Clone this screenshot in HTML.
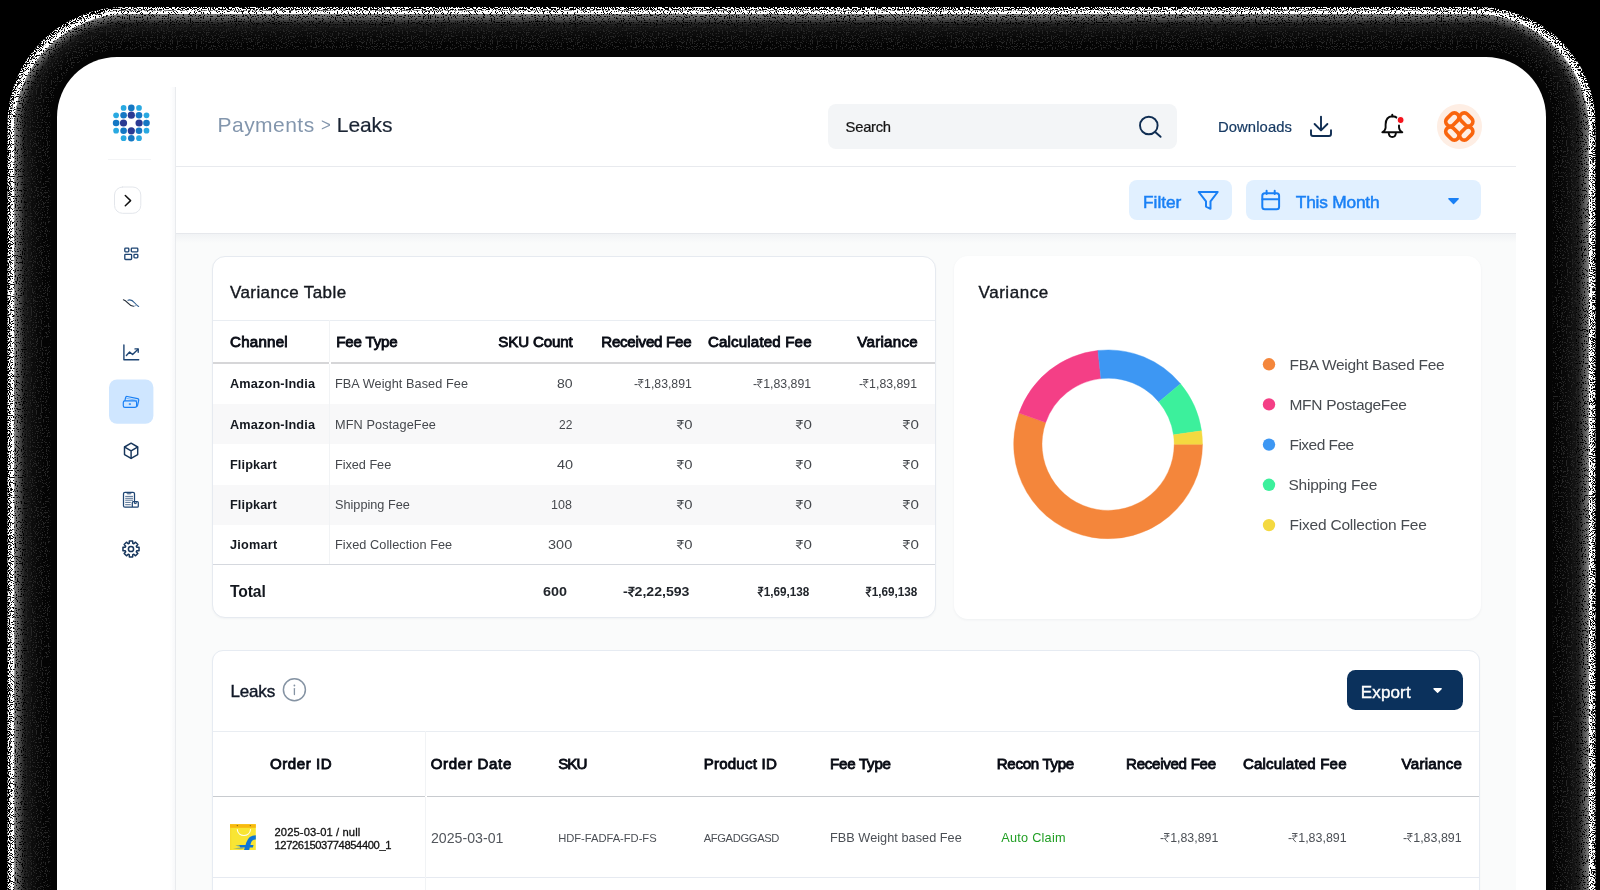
<!DOCTYPE html>
<html>
<head>
<meta charset="utf-8">
<title>Payments - Leaks</title>
<style>
*{box-sizing:border-box;margin:0;padding:0}
html,body{width:1600px;height:890px;overflow:hidden;background:#000}
body{font-family:"Liberation Sans",sans-serif;position:relative;color:#1e293b}
.abs{position:absolute}
.t{position:absolute;white-space:nowrap;line-height:1}
#frame{position:absolute;left:0;top:0;width:1600px;height:890px}
#app{position:absolute;left:57px;top:57px;width:1489px;height:900px;background:#fff;border-radius:60px 60px 0 0;overflow:hidden}
/* coordinates inside #app are page coords minus 57 -> use wrapper shifted */
#pg{position:absolute;left:-57px;top:-57px;width:1600px;height:890px;will-change:transform}
#main{position:absolute;left:176px;top:234px;width:1340px;height:700px;background:#fafbfb}
#main:before{content:"";position:absolute;left:0;top:0;width:100%;height:9px;background:linear-gradient(#f1f3f5,#fafbfb)}
.card{position:absolute;background:#fff;border:1px solid #e6eaf0;border-radius:13px;box-shadow:0 1px 2px rgba(16,40,80,.04)}
.hl{position:absolute;height:1px;background:#e6eaf0}
.vl{position:absolute;width:1px;background:#eef0f4}
.b{font-weight:bold}
.r{text-align:right}
svg{position:absolute;overflow:visible}
.rs{position:relative;display:inline-block;width:.46em;height:.73em;margin:0 .02em 0 .01em;vertical-align:baseline;top:.03em}
.rs svg{position:absolute;left:0;top:0;width:100%;height:100%}
</style>
</head>
<body>
<!-- FRAME-START -->
<svg id="frame" width="1600" height="890" viewBox="0 0 1600 890">
<defs>
<filter id="nzA" x="0" y="0" width="1600" height="890" filterUnits="userSpaceOnUse" color-interpolation-filters="sRGB">
<feTurbulence type="fractalNoise" baseFrequency="0.85" numOctaves="1" seed="7" result="t"/>
<feColorMatrix in="t" type="matrix" values="0 0 0 0 0  0 0 0 0 0  0 0 0 0 0  30 0 0 0 -14.4"/>
<feComposite in2="SourceGraphic" operator="in"/>
</filter>
<filter id="nzB" x="0" y="0" width="1600" height="890" filterUnits="userSpaceOnUse" color-interpolation-filters="sRGB">
<feTurbulence type="fractalNoise" baseFrequency="0.85" numOctaves="1" seed="11" result="t"/>
<feColorMatrix in="t" type="matrix" values="0 0 0 0 0  0 0 0 0 0  0 0 0 0 0  30 0 0 0 -16.8"/>
<feComposite in2="SourceGraphic" operator="in"/>
</filter>
<filter id="nzC" x="0" y="0" width="1600" height="890" filterUnits="userSpaceOnUse" color-interpolation-filters="sRGB">
<feTurbulence type="fractalNoise" baseFrequency="0.85" numOctaves="1" seed="23" result="t"/>
<feColorMatrix in="t" type="matrix" values="0 0 0 0 0  0 0 0 0 0  0 0 0 0 0  30 0 0 0 -17.7"/>
<feComposite in2="SourceGraphic" operator="in"/>
</filter>
<filter id="nzD" x="0" y="0" width="1600" height="890" filterUnits="userSpaceOnUse" color-interpolation-filters="sRGB">
<feTurbulence type="fractalNoise" baseFrequency="0.8" numOctaves="1" seed="41" result="t"/>
<feColorMatrix in="t" type="matrix" values="0 0 0 0 .15  0 0 0 0 .15  0 0 0 0 .15  0 30 0 0 -17.4"/>
<feComposite in2="SourceGraphic" operator="in"/>
</filter>
</defs>
<rect width="1600" height="890" fill="#000"/>
<rect x="7.5" y="7.1" width="1588.0" height="1000" rx="116.9" fill="#fff"/>
<rect x="14.3" y="13.9" width="1574.4" height="1000" rx="114.7" fill="#767676"/>
<rect x="16.3" y="15.9" width="1570.4" height="1000" rx="112.1" fill="#646464"/>
<rect x="18.3" y="17.9" width="1566.4" height="1000" rx="109.5" fill="#505050"/>
<rect x="20.3" y="19.9" width="1562.4" height="1000" rx="107.0" fill="#3c3c3c"/>
<rect x="22.3" y="21.9" width="1558.4" height="1000" rx="104.4" fill="#2a2a2a"/>
<rect x="24.3" y="23.9" width="1554.4" height="1000" rx="101.9" fill="#1b1b1b"/>
<rect x="27.3" y="26.9" width="1548.4" height="1000" rx="98.0" fill="#121212"/>
<rect x="31.3" y="30.9" width="1540.4" height="1000" rx="92.9" fill="#0c0c0c"/>
<rect x="36.3" y="35.9" width="1530.4" height="1000" rx="86.5" fill="#080808"/>
<rect x="42.3" y="41.9" width="1518.4" height="1000" rx="78.8" fill="#040404"/>
<path filter="url(#nzA)" fill="#000" fill-rule="evenodd" d="M0 0H1600V890H0Z M10.8 1000V125.8A115.4 115.4 0 0 1 126.2 10.4H1476.8A115.4 115.4 0 0 1 1592.2 125.8V1000Z"/>
<path filter="url(#nzB)" fill="#000" fill-rule="evenodd" d="M10.8 1000V125.8A115.4 115.4 0 0 1 126.2 10.4H1476.8A115.4 115.4 0 0 1 1592.2 125.8V1000Z M14.3 1000V128.6A114.7 114.7 0 0 1 129.0 13.9H1474.0A114.7 114.7 0 0 1 1588.7 128.6V1000Z"/>
<path filter="url(#nzC)" fill="#000" fill-rule="evenodd" d="M14.3 1000V128.6A114.7 114.7 0 0 1 129.0 13.9H1474.0A114.7 114.7 0 0 1 1588.7 128.6V1000Z M27.3 1000V124.9A98.0 98.0 0 0 1 125.3 26.9H1477.7A98.0 98.0 0 0 1 1575.7 124.9V1000Z"/>
<path filter="url(#nzD)" fill="#2a2a2a" fill-rule="evenodd" d="M25.3 1000V125.5A100.6 100.6 0 0 1 125.9 24.9H1477.1A100.6 100.6 0 0 1 1577.7 125.5V1000Z M50.3 1000V118.5A68.6 68.6 0 0 1 118.9 49.9H1484.1A68.6 68.6 0 0 1 1552.7 118.5V1000Z"/>
</svg>
<!-- FRAME-END -->

<div id="app"><div id="pg">
<!-- SIDEBAR-START -->
<div class="abs" style="left:170px;top:87px;width:5px;height:820px;background:linear-gradient(90deg,rgba(240,242,245,0),rgba(240,242,245,.5))"></div>
<div class="vl" style="left:175px;top:87px;height:820px;background:#e9ebee"></div>
<div class="hl" style="left:108px;top:159px;width:43px;background:#f3f4f6"></div>
<svg style="left:0;top:0" width="200" height="600" viewBox="0 0 200 600" fill="none" stroke-linecap="round" stroke-linejoin="round">
<!-- logo -->
<g stroke="none">
<g fill="#29a9e1">
<circle cx="123.6" cy="107.9" r="2.85"/><circle cx="139" cy="107.9" r="2.85"/>
<circle cx="116.1" cy="115.3" r="2.85"/><circle cx="146.5" cy="115.3" r="2.85"/>
<circle cx="116.1" cy="130.7" r="2.85"/><circle cx="146.5" cy="130.7" r="2.85"/>
<circle cx="123.6" cy="138.2" r="2.85"/><circle cx="139" cy="138.2" r="2.85"/>
</g>
<g fill="#1578c4">
<circle cx="131.3" cy="107.9" r="3.3"/><circle cx="131.3" cy="138.2" r="3.3"/>
<circle cx="116.1" cy="123" r="3.3"/><circle cx="146.5" cy="123" r="3.3"/>
<circle cx="123.6" cy="115.3" r="3.3"/><circle cx="139" cy="115.3" r="3.3"/>
<circle cx="123.6" cy="130.7" r="3.3"/><circle cx="139" cy="130.7" r="3.3"/>
</g>
<g fill="#2b3a93">
<circle cx="131.3" cy="115.2" r="3.6"/><circle cx="131.3" cy="130.8" r="3.6"/>
<circle cx="123.5" cy="123" r="3.6"/><circle cx="139.1" cy="123" r="3.6"/>
</g>
</g>
<!-- toggle -->
<rect x="114.5" y="187" width="26.3" height="26.3" rx="8" fill="#fff" stroke="#e3e6eb" stroke-width="1"/>
<path d="M125.3 195.5L130.6 200.6L125.3 205.7" stroke="#111" stroke-width="1.5"/>
<!-- dashboard -->
<g stroke="#1e4573" stroke-width="1.35">
<rect x="124.8" y="248.1" width="4" height="3.7" rx=".8"/>
<rect x="131.3" y="248.1" width="6.5" height="3.7" rx=".8"/>
<rect x="124.8" y="254.3" width="6.8" height="5.2" rx=".8"/>
<rect x="134" y="254.3" width="3.8" height="3.6" rx=".8"/>
</g>
<!-- wave -->
<path d="M123.4 299.8C127.5 300.6 128.6 306.4 133.6 306.3" stroke="#222a35" stroke-width="1.1"/>
<path d="M128 300.2C133.4 298 134.4 304.6 138.7 306.4" stroke="#2d5c8e" stroke-width="1.1"/>
<path d="M133.6 306.3C135 306.2 136 305.4 136.6 304.6" stroke="#6b87a8" stroke-width=".8"/>
<!-- chart -->
<g stroke="#1e4573" stroke-width="1.4">
<path d="M123.9 345V359.8H138.7"/>
<path d="M126.4 355.4L129.6 352.1L132.6 354.5L138 349.2"/>
<path d="M135 348.9H138.2V352.2"/>
</g>
<!-- active -->
<rect x="109" y="379.4" width="44.4" height="44.4" rx="8" fill="#cfe6ff" stroke="none"/>
<g stroke="#1a80f5" stroke-width="1.2">
<rect x="123.3" y="400.9" width="13.3" height="6.5" rx="1.6"/>
<path d="M124.9 400.6L125.6 397.6Q125.9 396.2 127.3 396.5L137.6 398.7Q139 399 138.7 400.4L137.6 405.4Q137.4 406.2 136.8 406.4"/>
<path d="M126.6 398.3L137.1 400.6" stroke-width=".8" opacity=".6"/>
<rect x="129.5" y="403.6" width="1" height="1" fill="#1a80f5" stroke-width=".6"/>
</g>
<!-- cube -->
<g stroke="#17365c" stroke-width="1.45">
<path d="M131.1 443.2L137.7 447V454.6L131.1 458.4L124.5 454.6V447Z"/>
<path d="M124.7 447.1L131.1 450.8L137.5 447.1M131.1 450.8V458.2"/>
</g>
<!-- clipboard -->
<g stroke="#1e4573" stroke-width="1.25">
<path d="M132 507.2H125Q123.5 507.2 123.5 505.7V493.8Q123.5 492.3 125 492.3H133Q134.5 492.3 134.5 493.8V500.6"/>
<path d="M127 492.5V493.2Q127 493.8 127.6 493.8H130.4Q131 493.8 131 493.2V492.5" stroke-width="1"/>
<path d="M125.6 496.4H132.6M125.6 498.3H132.6M125.6 500.2H132.6M125.6 502.4H130.4M125.6 504.7H130.4" stroke-width=".9" opacity=".85"/>
<rect x="132.3" y="501.6" width="6" height="5.6" rx="1" fill="#fff"/>
<path d="M134.4 501.8V503.6H136.2V501.8" stroke-width="1"/>
</g>
<!-- gear -->
<g stroke="#17365c" stroke-width="1.5">
<circle cx="131" cy="549" r="2.6"/>
<path d="M129.23 543.27 L129.37 540.96 L132.63 540.96 L132.77 543.27 L133.80 543.69 L135.53 542.17 L137.83 544.47 L136.31 546.20 L136.73 547.23 L139.04 547.37 L139.04 550.63 L136.73 550.77 L136.31 551.80 L137.83 553.53 L135.53 555.83 L133.80 554.31 L132.77 554.73 L132.63 557.04 L129.37 557.04 L129.23 554.73 L128.20 554.31 L126.47 555.83 L124.17 553.53 L125.69 551.80 L125.27 550.77 L122.96 550.63 L122.96 547.37 L125.27 547.23 L125.69 546.20 L124.17 544.47 L126.47 542.17 L128.20 543.69Z" stroke-linejoin="round"/>
</g>
</svg>
<!-- SIDEBAR-END -->

<!-- HEADER-START -->
<div class="hl" style="left:176px;top:166px;width:1340px;background:#e8eaee"></div>
<div class="abs" style="left:176px;top:167px;width:1340px;height:66px;background:#fff"></div>
<div class="hl" style="left:176px;top:233px;width:1340px;background:#e6e8ec"></div>
<div class="abs" style="left:828px;top:104px;width:349px;height:45px;border-radius:8px;background:#f3f5f7"></div>
<div class="abs" style="left:1128.8px;top:180.2px;width:103.7px;height:40px;border-radius:8px;background:#e1f0ff"></div>
<div class="abs" style="left:1246.3px;top:180.2px;width:234.4px;height:40px;border-radius:8px;background:#e1f0ff"></div>
<div class="abs" style="left:1437px;top:104.2px;width:44.6px;height:44.6px;border-radius:50%;background:#feeee4"></div>
<svg style="left:0;top:0" width="1600" height="240" viewBox="0 0 1600 240" fill="none" stroke-linecap="round" stroke-linejoin="round">
<!-- search -->
<g stroke="#0f2d52" stroke-width="1.9"><circle cx="1148.8" cy="125.5" r="8.8"/><path d="M1155.2 132L1160.6 136.8"/></g>
<!-- download -->
<g stroke="#0f2d52" stroke-width="1.9"><path d="M1311 130.2V134Q1311 136 1313 136H1329Q1331 136 1331 134V130.2"/><path d="M1321 116.6V130M1314.6 124L1321 130.4L1327.4 124"/></g>
<!-- bell -->
<g stroke="#0a0a0a" stroke-width="1.9">
<path d="M1397.600 118.300Q1395.500 116.300 1392.300 116.300Q1385.800 116.700 1385.600 124.500V127.800Q1385.400 130.500 1382.300 132.300H1402.300Q1399.300 130.600 1399.000 127.500V125.500"/>
<path d="M1392.300 116.200V114.800"/>
<path d="M1388.700 133.000Q1389.000 137.000 1392.300 137.000Q1395.600 137.000 1395.900 133.000"/>
</g>
<circle cx="1400.600" cy="120.000" r="3.500" fill="#f5141d" stroke="#fff" stroke-width="1.2"/>
<!-- avatar icon -->
<g stroke="#f9650e" stroke-width="3.7">
<rect x="-7.4" y="-4.5" width="14.8" height="9" rx="4.5" transform="translate(1452.3 119.500) rotate(-45)"/>
<rect x="-7.4" y="-4.5" width="14.8" height="9" rx="4.5" transform="translate(1466.300 119.500) rotate(45)"/>
<rect x="-7.4" y="-4.5" width="14.8" height="9" rx="4.5" transform="translate(1452.3 133.500) rotate(45)"/>
<rect x="-7.4" y="-4.5" width="14.8" height="9" rx="4.5" transform="translate(1466.300 133.500) rotate(-45)"/>
</g>
<!-- funnel -->
<path d="M1198.700 192H1217.700L1210.500 201.300V208.800L1206 206.600V201.300Z" stroke="#1a80f5" stroke-width="2"/>
<!-- calendar -->
<g stroke="#1a80f5" stroke-width="2"><rect x="1262.300" y="193.300" width="16.800" height="15.900" rx="2.500"/><path d="M1262.500 199.200H1279M1266.600 190.800V194M1274.700 190.800V194"/></g>
<!-- caret -->
<path d="M1448.900 198.800H1458.200L1453.550 203.400Z" fill="#1a80f5" stroke="#1a80f5" stroke-width="1.4"/>
</svg>
<div class="t" style="left:217.50px;top:114.00px;font-size:21px;color:#8396ad;letter-spacing:0.471px;">Payments</div>
<div class="t" style="left:321.00px;top:117.00px;font-size:17.5px;color:#8396ad;transform:scaleX(0.9600);transform-origin:0 0;">&gt;</div>
<div class="t" style="left:336.80px;top:114.00px;font-size:21px;color:#1a2433;letter-spacing:-0.075px;-webkit-text-stroke:0.2px #1a2433;">Leaks</div>
<div class="t" style="left:845.60px;top:120.00px;font-size:14.8px;color:#141414;letter-spacing:-0.280px;-webkit-text-stroke:0.22px #141414;">Search</div>
<div class="t" style="left:1218.00px;top:120.00px;font-size:14.8px;color:#173a63;letter-spacing:0.088px;-webkit-text-stroke:0.2px #173a63;">Downloads</div>
<div class="t" style="left:1143.10px;top:194.00px;font-size:17.3px;color:#1a80f5;letter-spacing:-0.040px;-webkit-text-stroke:0.5px #1a80f5;">Filter</div>
<div class="t" style="left:1295.80px;top:194.00px;font-size:17.3px;color:#1a80f5;letter-spacing:-0.189px;-webkit-text-stroke:0.5px #1a80f5;">This Month</div>
<!-- HEADER-END -->

<div id="main"></div>

<!-- VTABLE-START -->
<div class="card" style="left:212px;top:256px;width:724px;height:362px;border-radius:13px"></div>
<div class="abs" style="left:213px;top:404px;width:722px;height:40px;background:#f8f8f9"></div>
<div class="abs" style="left:213px;top:484.500px;width:722px;height:40px;background:#f8f8f9"></div>
<div class="hl" style="left:213px;top:319.500px;width:722px;background:#e9edf2"></div>
<div class="abs" style="left:213px;top:362px;width:722px;height:2px;background:#d6d6d8"></div>
<div class="hl" style="left:213px;top:564px;width:722px;background:#d5d8de"></div>
<div class="vl" style="left:329px;top:320px;height:244px;background:#f1f3f5"></div>
<div class="abs" style="left:328.500px;top:362px;width:2px;height:2px;background:#fff"></div>
<div class="t" style="left:230.00px;top:284.00px;font-size:17px;color:#14181f;letter-spacing:0.400px;-webkit-text-stroke:0.38px #14181f;">Variance Table</div>
<div class="t" style="left:230.00px;top:334.00px;font-size:15.1px;color:#080b14;letter-spacing:0.250px;-webkit-text-stroke:0.85px #080b14;">Channel</div>
<div class="t" style="left:336.30px;top:334.00px;font-size:15.1px;color:#080b14;letter-spacing:-0.186px;-webkit-text-stroke:0.85px #080b14;">Fee Type</div>
<div class="t" style="left:498.30px;top:334.00px;font-size:15.1px;color:#080b14;letter-spacing:-0.137px;-webkit-text-stroke:0.85px #080b14;">SKU Count</div>
<div class="t" style="left:601.30px;top:334.00px;font-size:15.1px;color:#080b14;letter-spacing:-0.255px;-webkit-text-stroke:0.85px #080b14;">Received Fee</div>
<div class="t" style="left:708.00px;top:334.00px;font-size:15.1px;color:#080b14;letter-spacing:0.154px;-webkit-text-stroke:0.85px #080b14;">Calculated Fee</div>
<div class="t" style="left:857.30px;top:334.00px;font-size:15.1px;color:#080b14;letter-spacing:0.271px;-webkit-text-stroke:0.85px #080b14;">Variance</div>
<div class="t" style="left:230.00px;top:378.00px;font-size:12.7px;color:#14181f;letter-spacing:0.164px;font-weight:bold;">Amazon-India</div>
<div class="t" style="left:335.00px;top:378.00px;font-size:12.7px;color:#45484d;letter-spacing:0.068px;">FBA Weight Based Fee</div>
<div class="t" style="left:557.00px;top:378.00px;font-size:12.7px;color:#45484d;transform:scaleX(1.1071);transform-origin:0 0;">80</div>
<div class="t" style="left:633.80px;top:378.00px;font-size:12.7px;color:#45484d;transform:scaleX(0.9667);transform-origin:0 0;">-<span class="rs"><svg viewBox="0 0 45 72" fill="none" stroke="currentColor" stroke-width="7.4" stroke-linecap="butt" stroke-linejoin="miter"><path d="M1 4H44M1 23H44M12 4C38 4 38 41 5 42.500L31 71"/></svg></span>1,83,891</div>
<div class="t" style="left:753.00px;top:378.00px;font-size:12.7px;color:#45484d;transform:scaleX(0.9717);transform-origin:0 0;">-<span class="rs"><svg viewBox="0 0 45 72" fill="none" stroke="currentColor" stroke-width="7.4" stroke-linecap="butt" stroke-linejoin="miter"><path d="M1 4H44M1 23H44M12 4C38 4 38 41 5 42.500L31 71"/></svg></span>1,83,891</div>
<div class="t" style="left:859.30px;top:378.00px;font-size:12.7px;color:#45484d;transform:scaleX(0.9700);transform-origin:0 0;">-<span class="rs"><svg viewBox="0 0 45 72" fill="none" stroke="currentColor" stroke-width="7.4" stroke-linecap="butt" stroke-linejoin="miter"><path d="M1 4H44M1 23H44M12 4C38 4 38 41 5 42.500L31 71"/></svg></span>1,83,891</div>
<div class="t" style="left:230.00px;top:419.00px;font-size:12.7px;color:#14181f;letter-spacing:0.164px;font-weight:bold;">Amazon-India</div>
<div class="t" style="left:335.00px;top:419.00px;font-size:12.7px;color:#45484d;letter-spacing:0.115px;">MFN PostageFee</div>
<div class="t" style="left:559.30px;top:419.00px;font-size:12.7px;color:#45484d;transform:scaleX(0.9429);transform-origin:0 0;">22</div>
<div class="t" style="left:676.80px;top:419.00px;font-size:12.7px;color:#45484d;transform:scaleX(1.1692);transform-origin:0 0;"><span class="rs"><svg viewBox="0 0 45 72" fill="none" stroke="currentColor" stroke-width="7.4" stroke-linecap="butt" stroke-linejoin="miter"><path d="M1 4H44M1 23H44M12 4C38 4 38 41 5 42.500L31 71"/></svg></span>0</div>
<div class="t" style="left:796.30px;top:419.00px;font-size:12.7px;color:#45484d;transform:scaleX(1.1923);transform-origin:0 0;"><span class="rs"><svg viewBox="0 0 45 72" fill="none" stroke="currentColor" stroke-width="7.4" stroke-linecap="butt" stroke-linejoin="miter"><path d="M1 4H44M1 23H44M12 4C38 4 38 41 5 42.500L31 71"/></svg></span>0</div>
<div class="t" style="left:902.50px;top:419.00px;font-size:12.7px;color:#45484d;transform:scaleX(1.1923);transform-origin:0 0;"><span class="rs"><svg viewBox="0 0 45 72" fill="none" stroke="currentColor" stroke-width="7.4" stroke-linecap="butt" stroke-linejoin="miter"><path d="M1 4H44M1 23H44M12 4C38 4 38 41 5 42.500L31 71"/></svg></span>0</div>
<div class="t" style="left:230.00px;top:459.00px;font-size:12.7px;color:#14181f;letter-spacing:0.114px;font-weight:bold;">Flipkart</div>
<div class="t" style="left:335.00px;top:459.00px;font-size:12.7px;color:#45484d;letter-spacing:-0.025px;">Fixed Fee</div>
<div class="t" style="left:557.00px;top:459.00px;font-size:12.7px;color:#45484d;transform:scaleX(1.1429);transform-origin:0 0;">40</div>
<div class="t" style="left:676.80px;top:459.00px;font-size:12.7px;color:#45484d;transform:scaleX(1.1692);transform-origin:0 0;"><span class="rs"><svg viewBox="0 0 45 72" fill="none" stroke="currentColor" stroke-width="7.4" stroke-linecap="butt" stroke-linejoin="miter"><path d="M1 4H44M1 23H44M12 4C38 4 38 41 5 42.500L31 71"/></svg></span>0</div>
<div class="t" style="left:796.30px;top:459.00px;font-size:12.7px;color:#45484d;transform:scaleX(1.1923);transform-origin:0 0;"><span class="rs"><svg viewBox="0 0 45 72" fill="none" stroke="currentColor" stroke-width="7.4" stroke-linecap="butt" stroke-linejoin="miter"><path d="M1 4H44M1 23H44M12 4C38 4 38 41 5 42.500L31 71"/></svg></span>0</div>
<div class="t" style="left:902.50px;top:459.00px;font-size:12.7px;color:#45484d;transform:scaleX(1.1923);transform-origin:0 0;"><span class="rs"><svg viewBox="0 0 45 72" fill="none" stroke="currentColor" stroke-width="7.4" stroke-linecap="butt" stroke-linejoin="miter"><path d="M1 4H44M1 23H44M12 4C38 4 38 41 5 42.500L31 71"/></svg></span>0</div>
<div class="t" style="left:230.00px;top:499.00px;font-size:12.7px;color:#14181f;letter-spacing:0.114px;font-weight:bold;">Flipkart</div>
<div class="t" style="left:335.00px;top:499.00px;font-size:12.7px;color:#45484d;">Shipping Fee</div>
<div class="t" style="left:550.81px;top:499.00px;font-size:12.7px;color:#45484d;transform:scaleX(0.9850);transform-origin:0 0;">108</div>
<div class="t" style="left:676.80px;top:499.00px;font-size:12.7px;color:#45484d;transform:scaleX(1.1692);transform-origin:0 0;"><span class="rs"><svg viewBox="0 0 45 72" fill="none" stroke="currentColor" stroke-width="7.4" stroke-linecap="butt" stroke-linejoin="miter"><path d="M1 4H44M1 23H44M12 4C38 4 38 41 5 42.500L31 71"/></svg></span>0</div>
<div class="t" style="left:796.30px;top:499.00px;font-size:12.7px;color:#45484d;transform:scaleX(1.1923);transform-origin:0 0;"><span class="rs"><svg viewBox="0 0 45 72" fill="none" stroke="currentColor" stroke-width="7.4" stroke-linecap="butt" stroke-linejoin="miter"><path d="M1 4H44M1 23H44M12 4C38 4 38 41 5 42.500L31 71"/></svg></span>0</div>
<div class="t" style="left:902.50px;top:499.00px;font-size:12.7px;color:#45484d;transform:scaleX(1.1923);transform-origin:0 0;"><span class="rs"><svg viewBox="0 0 45 72" fill="none" stroke="currentColor" stroke-width="7.4" stroke-linecap="butt" stroke-linejoin="miter"><path d="M1 4H44M1 23H44M12 4C38 4 38 41 5 42.500L31 71"/></svg></span>0</div>
<div class="t" style="left:230.00px;top:539.00px;font-size:12.7px;color:#14181f;letter-spacing:0.217px;font-weight:bold;">Jiomart</div>
<div class="t" style="left:335.00px;top:539.00px;font-size:12.7px;color:#45484d;letter-spacing:0.079px;">Fixed Collection Fee</div>
<div class="t" style="left:547.50px;top:539.00px;font-size:12.7px;color:#45484d;transform:scaleX(1.1429);transform-origin:0 0;">300</div>
<div class="t" style="left:676.80px;top:539.00px;font-size:12.7px;color:#45484d;transform:scaleX(1.1692);transform-origin:0 0;"><span class="rs"><svg viewBox="0 0 45 72" fill="none" stroke="currentColor" stroke-width="7.4" stroke-linecap="butt" stroke-linejoin="miter"><path d="M1 4H44M1 23H44M12 4C38 4 38 41 5 42.500L31 71"/></svg></span>0</div>
<div class="t" style="left:796.30px;top:539.00px;font-size:12.7px;color:#45484d;transform:scaleX(1.1923);transform-origin:0 0;"><span class="rs"><svg viewBox="0 0 45 72" fill="none" stroke="currentColor" stroke-width="7.4" stroke-linecap="butt" stroke-linejoin="miter"><path d="M1 4H44M1 23H44M12 4C38 4 38 41 5 42.500L31 71"/></svg></span>0</div>
<div class="t" style="left:902.50px;top:539.00px;font-size:12.7px;color:#45484d;transform:scaleX(1.1923);transform-origin:0 0;"><span class="rs"><svg viewBox="0 0 45 72" fill="none" stroke="currentColor" stroke-width="7.4" stroke-linecap="butt" stroke-linejoin="miter"><path d="M1 4H44M1 23H44M12 4C38 4 38 41 5 42.500L31 71"/></svg></span>0</div>
<div class="t" style="left:230.00px;top:584.00px;font-size:15.7px;color:#14181f;letter-spacing:-0.125px;font-weight:bold;">Total</div>
<div class="t" style="left:543.30px;top:585.00px;font-size:13.4px;color:#22262c;font-weight:bold;transform:scaleX(1.0739);transform-origin:0 0;">600</div>
<div class="t" style="left:623.00px;top:585.00px;font-size:13.4px;color:#22262c;font-weight:bold;transform:scaleX(1.0524);transform-origin:0 0;">-<span class="rs"><svg viewBox="0 0 45 72" fill="none" stroke="currentColor" stroke-width="10.5" stroke-linecap="butt" stroke-linejoin="miter"><path d="M1 4H44M1 23H44M12 4C38 4 38 41 5 42.500L31 71"/></svg></span>2,22,593</div>
<div class="t" style="left:758.38px;top:585.00px;font-size:13.4px;color:#22262c;font-weight:bold;transform:scaleX(0.8750);transform-origin:0 0;"><span class="rs"><svg viewBox="0 0 45 72" fill="none" stroke="currentColor" stroke-width="10.5" stroke-linecap="butt" stroke-linejoin="miter"><path d="M1 4H44M1 23H44M12 4C38 4 38 41 5 42.500L31 71"/></svg></span>1,69,138</div>
<div class="t" style="left:865.88px;top:585.00px;font-size:13.4px;color:#22262c;font-weight:bold;transform:scaleX(0.8750);transform-origin:0 0;"><span class="rs"><svg viewBox="0 0 45 72" fill="none" stroke="currentColor" stroke-width="10.5" stroke-linecap="butt" stroke-linejoin="miter"><path d="M1 4H44M1 23H44M12 4C38 4 38 41 5 42.500L31 71"/></svg></span>1,69,138</div>
<!-- VTABLE-END -->

<!-- DONUT-START -->
<div class="card" style="left:954px;top:256px;width:527px;height:362.500px;border-radius:14px;border:none;box-shadow:0 1px 3px rgba(16,40,80,.05)"></div>
<svg style="left:0;top:0" width="1600" height="640" viewBox="0 0 1600 640">
<path d="M1202.50 444.30A94.4 94.4 0 1 1 1019.01 413.10L1045.71 422.45A66.1 66.1 0 1 0 1174.20 444.30Z" fill="#f4863b" stroke="#f4863b" stroke-width="0.4"/>
<path d="M1019.01 413.10A94.4 94.4 0 0 1 1097.90 350.45L1100.96 378.59A66.1 66.1 0 0 0 1045.71 422.45Z" fill="#f43f86" stroke="#f43f86" stroke-width="0.4"/>
<path d="M1097.90 350.45A94.4 94.4 0 0 1 1180.52 383.75L1158.81 401.90A66.1 66.1 0 0 0 1100.96 378.59Z" fill="#3d97f3" stroke="#3d97f3" stroke-width="0.4"/>
<path d="M1180.52 383.75A94.4 94.4 0 0 1 1201.53 430.84L1173.52 434.87A66.1 66.1 0 0 0 1158.81 401.90Z" fill="#3cf09c" stroke="#3cf09c" stroke-width="0.4"/>
<path d="M1201.53 430.84A94.4 94.4 0 0 1 1202.50 444.30L1174.20 444.30A66.1 66.1 0 0 0 1173.52 434.87Z" fill="#f4d940" stroke="#f4d940" stroke-width="0.4"/>
<circle cx="1269" cy="364.3" r="6.2" fill="#f4863b"/>
<circle cx="1269" cy="404.4" r="6.2" fill="#f43f86"/>
<circle cx="1269" cy="444.6" r="6.2" fill="#3d97f3"/>
<circle cx="1269" cy="484.8" r="6.2" fill="#3cf09c"/>
<circle cx="1269" cy="525.1" r="6.2" fill="#f4d940"/>
</svg>
<div class="t" style="left:978.60px;top:284.00px;font-size:17px;color:#14181f;letter-spacing:0.529px;-webkit-text-stroke:0.38px #14181f;">Variance</div>
<div class="t" style="left:1289.50px;top:357.00px;font-size:15.5px;color:#474b50;letter-spacing:-0.300px;">FBA Weight Based Fee</div>
<div class="t" style="left:1289.50px;top:397.00px;font-size:15.5px;color:#474b50;letter-spacing:-0.308px;">MFN PostageFee</div>
<div class="t" style="left:1289.50px;top:437.00px;font-size:15.5px;color:#474b50;letter-spacing:-0.537px;">Fixed Fee</div>
<div class="t" style="left:1288.50px;top:477.00px;font-size:15.5px;color:#474b50;letter-spacing:-0.227px;">Shipping Fee</div>
<div class="t" style="left:1289.50px;top:517.00px;font-size:15.5px;color:#474b50;letter-spacing:-0.211px;">Fixed Collection Fee</div>
<!-- DONUT-END -->

<!-- LEAKS-START -->
<div class="card" style="left:212px;top:650px;width:1268px;height:300px;border-radius:11px;border-color:#e6ebf2"></div>
<div class="hl" style="left:213px;top:730.500px;width:1266px;background:#e9edf2"></div>
<div class="abs" style="left:213px;top:796px;width:1266px;height:1px;background:#c8cbcf"></div>
<div class="hl" style="left:213px;top:876.500px;width:1266px;background:#e6eaf1"></div>
<div class="vl" style="left:425px;top:731px;height:170px;background:#f1f3f5"></div>
<div class="abs" style="left:424.500px;top:796px;width:2px;height:1px;background:#fff"></div>
<div class="abs" style="left:1346.500px;top:669.800px;width:116.300px;height:40px;border-radius:8.500px;background:#0b315c"></div>
<svg style="left:0;top:0" width="1600" height="890" viewBox="0 0 1600 890" fill="none">
<circle cx="294.4" cy="689.8" r="11" stroke="#8593a3" stroke-width="1.5"/>
<path d="M294.4 688.6V694.6" stroke="#8593a3" stroke-width="1.3" stroke-linecap="round"/>
<circle cx="294.4" cy="685.5" r=".9" fill="#8593a3"/>
<path d="M1434 688.700H1441.200L1437.600 692.200Z" fill="#fff" stroke="#fff" stroke-width="1.300" stroke-linejoin="round"/>
<!-- flipkart -->
<rect x="230" y="824.2" width="25.8" height="25.800" fill="#f9e533"/>
<rect x="230" y="824.2" width="25.8" height="3.600" fill="#f8b90f"/>
<rect x="230" y="827.800" width="1.200" height="22.200" fill="#f6d92b" opacity=".7"/>
<circle cx="237.300" cy="825.600" r=".6" fill="#6b5a1a"/><circle cx="250.300" cy="825.600" r=".6" fill="#6b5a1a"/>
<path d="M237.300 829.600C238 837.500 249.800 837.500 250.500 829.600" stroke="#fffdf0" stroke-width="1.100" stroke-linecap="round"/>
<path d="M244 850L246.300 842.500Q248.600 835.300 255.800 835.200V839.600Q251.700 839.500 250.800 843.400L250.400 844.900H253.500L252.900 847.500H249.800L249.200 850Z" fill="#0d74d6"/>
<path d="M239.500 844.900H247.500L246.800 847.600H240.200Z" fill="#0d74d6"/>
<path d="M235.300 845.700L240.500 845L240.300 846.600Z" fill="#0d74d6" opacity=".75"/>
<path d="M233 848.500L242 847.300L244 848.600L241 849.300Z" fill="#3f83a8" opacity=".5"/>
</svg>
<div class="t" style="left:230.40px;top:683.00px;font-size:17px;color:#111827;letter-spacing:-0.150px;-webkit-text-stroke:0.4px #111827;">Leaks</div>
<div class="t" style="left:1360.80px;top:684.00px;font-size:17px;color:#ffffff;letter-spacing:0.140px;-webkit-text-stroke:0.4px #ffffff;">Export</div>
<div class="t" style="left:270.00px;top:756.00px;font-size:15.1px;color:#080b14;letter-spacing:0.529px;-webkit-text-stroke:0.85px #080b14;">Order ID</div>
<div class="t" style="left:430.70px;top:756.00px;font-size:15.1px;color:#080b14;letter-spacing:0.667px;-webkit-text-stroke:0.85px #080b14;">Order Date</div>
<div class="t" style="left:558.20px;top:756.00px;font-size:15.1px;color:#080b14;letter-spacing:-0.950px;-webkit-text-stroke:0.85px #080b14;">SKU</div>
<div class="t" style="left:703.70px;top:756.00px;font-size:15.1px;color:#080b14;letter-spacing:0.200px;-webkit-text-stroke:0.85px #080b14;">Product ID</div>
<div class="t" style="left:830.00px;top:756.00px;font-size:15.1px;color:#080b14;letter-spacing:-0.243px;-webkit-text-stroke:0.85px #080b14;">Fee Type</div>
<div class="t" style="left:996.70px;top:756.00px;font-size:15.1px;color:#080b14;letter-spacing:-0.300px;-webkit-text-stroke:0.85px #080b14;">Recon Type</div>
<div class="t" style="left:1126.00px;top:756.00px;font-size:15.1px;color:#080b14;letter-spacing:-0.273px;-webkit-text-stroke:0.85px #080b14;">Received Fee</div>
<div class="t" style="left:1243.00px;top:756.00px;font-size:15.1px;color:#080b14;letter-spacing:0.154px;-webkit-text-stroke:0.85px #080b14;">Calculated Fee</div>
<div class="t" style="left:1401.50px;top:756.00px;font-size:15.1px;color:#080b14;letter-spacing:0.286px;-webkit-text-stroke:0.85px #080b14;">Variance</div>
<div class="t" style="left:274.50px;top:827.00px;font-size:11.2px;color:#111;letter-spacing:0.113px;-webkit-text-stroke:0.3px #111;">2025-03-01 / null</div>
<div class="t" style="left:274.50px;top:840.00px;font-size:11.2px;color:#111;letter-spacing:-0.395px;-webkit-text-stroke:0.3px #111;">127261503774854400_1</div>
<div class="t" style="left:430.70px;top:831.00px;font-size:14px;color:#52565c;transform:scaleX(1.0113);transform-origin:0 0;">2025-03-01</div>
<div class="t" style="left:558.20px;top:833.00px;font-size:11.2px;color:#4b4f55;letter-spacing:-0.029px;">HDF-FADFA-FD-FS</div>
<div class="t" style="left:703.70px;top:833.00px;font-size:11.2px;color:#4b4f55;letter-spacing:-0.356px;">AFGADGGASD</div>
<div class="t" style="left:830.00px;top:832.00px;font-size:12.7px;color:#4b4f55;letter-spacing:0.042px;">FBB Weight based Fee</div>
<div class="t" style="left:1001.30px;top:832.00px;font-size:12.7px;color:#1f9e22;letter-spacing:0.244px;">Auto Claim</div>
<div class="t" style="left:1159.50px;top:832.00px;font-size:12.7px;color:#4b4f55;transform:scaleX(0.9750);transform-origin:0 0;">-<span class="rs"><svg viewBox="0 0 45 72" fill="none" stroke="currentColor" stroke-width="7.4" stroke-linecap="butt" stroke-linejoin="miter"><path d="M1 4H44M1 23H44M12 4C38 4 38 41 5 42.500L31 71"/></svg></span>1,83,891</div>
<div class="t" style="left:1288.00px;top:832.00px;font-size:12.7px;color:#4b4f55;transform:scaleX(0.9800);transform-origin:0 0;">-<span class="rs"><svg viewBox="0 0 45 72" fill="none" stroke="currentColor" stroke-width="7.4" stroke-linecap="butt" stroke-linejoin="miter"><path d="M1 4H44M1 23H44M12 4C38 4 38 41 5 42.500L31 71"/></svg></span>1,83,891</div>
<div class="t" style="left:1403.00px;top:832.00px;font-size:12.7px;color:#4b4f55;transform:scaleX(0.9800);transform-origin:0 0;">-<span class="rs"><svg viewBox="0 0 45 72" fill="none" stroke="currentColor" stroke-width="7.4" stroke-linecap="butt" stroke-linejoin="miter"><path d="M1 4H44M1 23H44M12 4C38 4 38 41 5 42.500L31 71"/></svg></span>1,83,891</div>
<!-- LEAKS-END -->
</div></div>
</body>
</html>
